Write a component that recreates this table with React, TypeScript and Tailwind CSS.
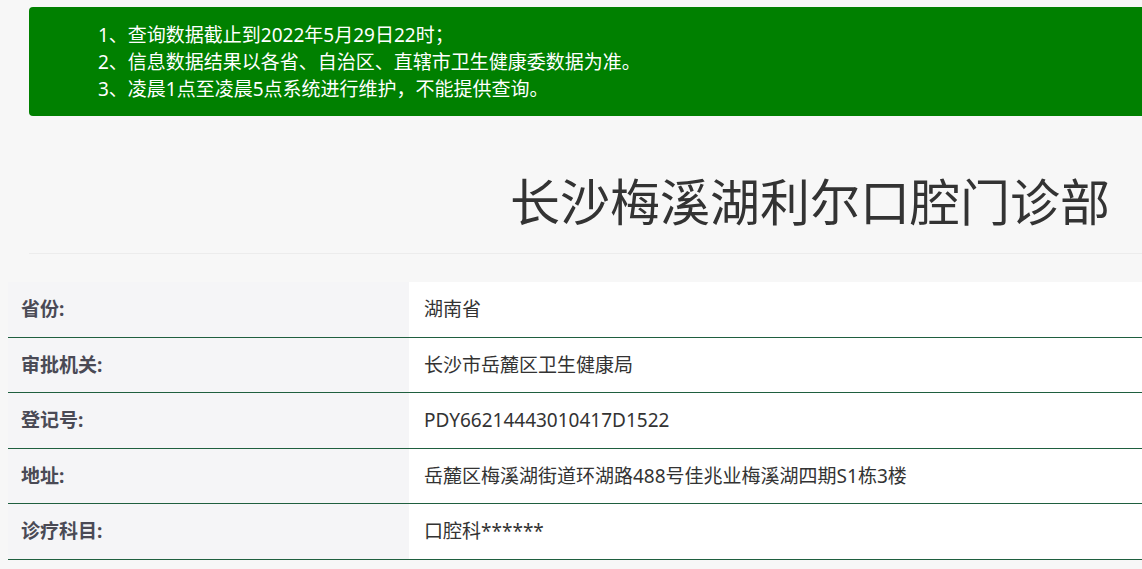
import React from 'react';

const rows: { label: string; value: string }[] = [
  { label: '省份:', value: '湖南省' },
  { label: '审批机关:', value: '长沙市岳麓区卫生健康局' },
  { label: '登记号:', value: 'PDY66214443010417D1522' },
  { label: '地址:', value: '岳麓区梅溪湖街道环湖路488号佳兆业梅溪湖四期S1栋3楼' },
  { label: '诊疗科目:', value: '口腔科******' },
];

const notes = [
  '1、查询数据截止到2022年5月29日22时；',
  '2、信息数据结果以各省、自治区、直辖市卫生健康委数据为准。',
  '3、凌晨1点至凌晨5点系统进行维护，不能提供查询。',
];

const App: React.FC = () => {
  return (
    <div
      className="min-h-[569px] w-full overflow-hidden bg-[#f7f7f7] pt-[7px]"
      style={{ fontFamily: '"Noto Sans", "Noto Sans CJK SC", sans-serif' }}
    >
      {/* notice banner */}
      <div className="ml-[29px] mr-[-20px] h-[109px] rounded-[4px] bg-[#008000] pl-[69px] pt-[15px] text-[19px] leading-[27px] text-white">
        {notes.map((n) => (
          <div key={n}>{n}</div>
        ))}
      </div>

      {/* title */}
      <div className="ml-[29px] flex h-[138px] items-center justify-end border-b border-[#ececec] pr-[32px]">
        <h1 className="pt-[34px] text-[50px] leading-[60px] text-[#333333]">长沙梅溪湖利尔口腔门诊部</h1>
      </div>

      {/* info table */}
      <div className="ml-[8px] mt-[28px]">
        {rows.map((r) => (
          <div key={r.label} className="flex h-[55.5px] border-b border-[#1f5f3f]">
            <div className="flex w-[401px] shrink-0 items-center bg-[#f5f5f7] pl-[13px] text-[19px] font-bold text-[#4a4a55]">
              {r.label}
            </div>
            <div className="flex flex-1 items-center bg-white pl-[15px] text-[19px] text-[#333333]">
              {r.value}
            </div>
          </div>
        ))}
      </div>
    </div>
  );
};

export default App;
